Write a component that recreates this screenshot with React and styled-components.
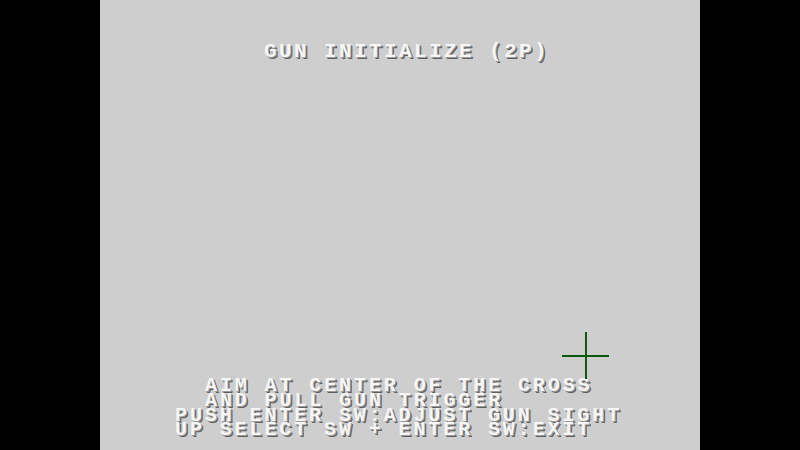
import React from 'react';
import styled, { createGlobalStyle } from 'styled-components';

const GlobalStyle = createGlobalStyle`
  html, body {
    margin: 0;
    padding: 0;
    background: #000;
  }
`;

const Frame = styled.div`
  width: 800px;
  height: 450px;
  display: flex;
  justify-content: center;
  background: #000;
`;

const Screen = styled.div`
  position: relative;
  width: 600px;
  height: 450px;
  background: #cecece;
  display: flex;
  flex-direction: column;
  overflow: hidden;
`;

const PixelText = styled.div`
  font-family: "Liberation Mono", "DejaVu Sans Mono", monospace;
  font-weight: bold;
  color: #f6f6f6;
  text-shadow: 1px 1px 0 #9a9a9a, 2px 2px 0 #5e5e5e;
  white-space: pre;
`;

const Title = styled(PixelText)`
  margin-top: 40px;
  padding-left: 164px;
  font-size: 21px;
  letter-spacing: 2.4px;
  line-height: 24px;
`;

const Help = styled.div`
  margin-top: auto;
  padding: 0 0 12px 75px;
  display: flex;
  flex-direction: column;
`;

const HelpLine = styled(PixelText)`
  font-size: 20px;
  letter-spacing: 2.9px;
  line-height: 14.7px;
  padding-left: ${(p) => (p.$indent ? 30 : 0)}px;
`;

const Cross = styled.svg`
  position: absolute;
  left: 462px;
  top: 332px;
`;

export default function App() {
  return (
    <>
      <GlobalStyle />
      <Frame>
        <Screen>
          <Title>GUN INITIALIZE (2P)</Title>
          <Help>
            <HelpLine $indent>AIM AT CENTER OF THE CROSS</HelpLine>
            <HelpLine $indent>AND PULL GUN TRIGGER</HelpLine>
            <HelpLine>PUSH ENTER SW:ADJUST GUN SIGHT</HelpLine>
            <HelpLine>UP SELECT SW + ENTER SW:EXIT</HelpLine>
          </Help>
          <Cross width="48" height="48" viewBox="0 0 48 48">
            <path d="M24 0V47M0 24H47" stroke="#0b5a10" strokeWidth="2" />
          </Cross>
        </Screen>
      </Frame>
    </>
  );
}
